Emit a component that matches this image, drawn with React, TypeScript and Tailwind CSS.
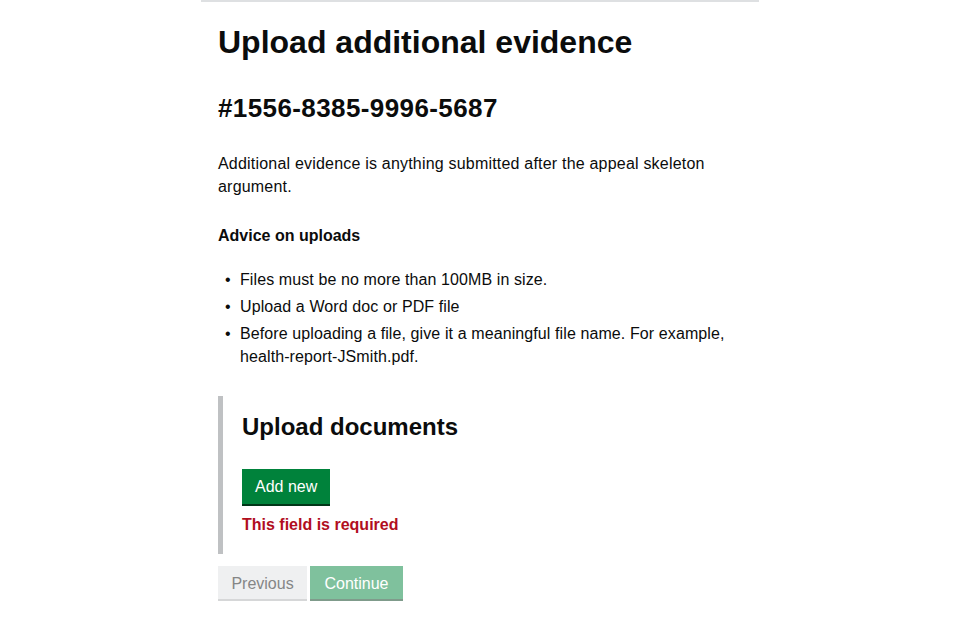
import React from 'react';

const advice = [
    'Files must be no more than 100MB in size.',
    'Upload a Word doc or PDF file',
    'Before uploading a file, give it a meaningful file name. For example, health-report-JSmith.pdf.',
];

const App: React.FC = () => {
    return (
        <div className="min-h-screen bg-white text-[#0b0c0c] font-['Liberation_Sans',Arial,sans-serif]">
            <div className="mx-auto w-[558px] border-t-2 border-[#dee0e2] pl-[17px] pr-4 pb-10">
                <h1 className="mt-[23px] text-[32px] leading-[35px] font-bold">Upload additional evidence</h1>

                <h2 className="mt-[33px] text-[26px] leading-[30px] font-bold tracking-[0.4px]">#1556-8385-9996-5687</h2>

                <p className="mt-[29px] text-[16px] leading-[23px] w-[510px] tracking-[0.2px]">
                    Additional evidence is anything submitted after the appeal skeleton argument.
                </p>

                <h3 className="mt-[26px] text-[16px] leading-[23px] font-bold">Advice on uploads</h3>

                <ul className="mt-[21px] flex flex-col gap-[4px] text-[16px] leading-[23px]">
                    {advice.map((item, i) => (
                        <li key={i} className="flex">
                            <span className="w-[22px] pl-[7px] shrink-0">•</span>
                            <span className="w-[490px] tracking-[0.1px]">{item}</span>
                        </li>
                    ))}
                </ul>

                <div className="mt-[28px] border-l-[5px] border-[#bfc1c3] pl-[19px] pt-[16px] pb-[18px]">
                    <h2 className="text-[24px] leading-[30px] font-bold">Upload documents</h2>
                    <button className="mt-[27px] h-[35px] px-[13px] bg-[#00823b] text-white text-[16px] leading-[20px] shadow-[0_2px_0_#003618]">
                        Add new
                    </button>
                    <p className="mt-[9px] text-[16px] leading-[23px] font-bold text-[#b10e1e]">This field is required</p>
                </div>

                <div className="mt-[12px] flex gap-[3px]">
                    <button className="h-[33px] w-[89px] pt-[3px] bg-[#eff0f1] text-[#858686] text-[16px] shadow-[0_2px_0_#d6d7d8]">
                        Previous
                    </button>
                    <button className="h-[33px] w-[93px] pt-[3px] bg-[#7fc19d] text-white text-[16px] shadow-[0_2px_0_#7f9b8b]">
                        Continue
                    </button>
                </div>
            </div>
        </div>
    );
};

export default App;
